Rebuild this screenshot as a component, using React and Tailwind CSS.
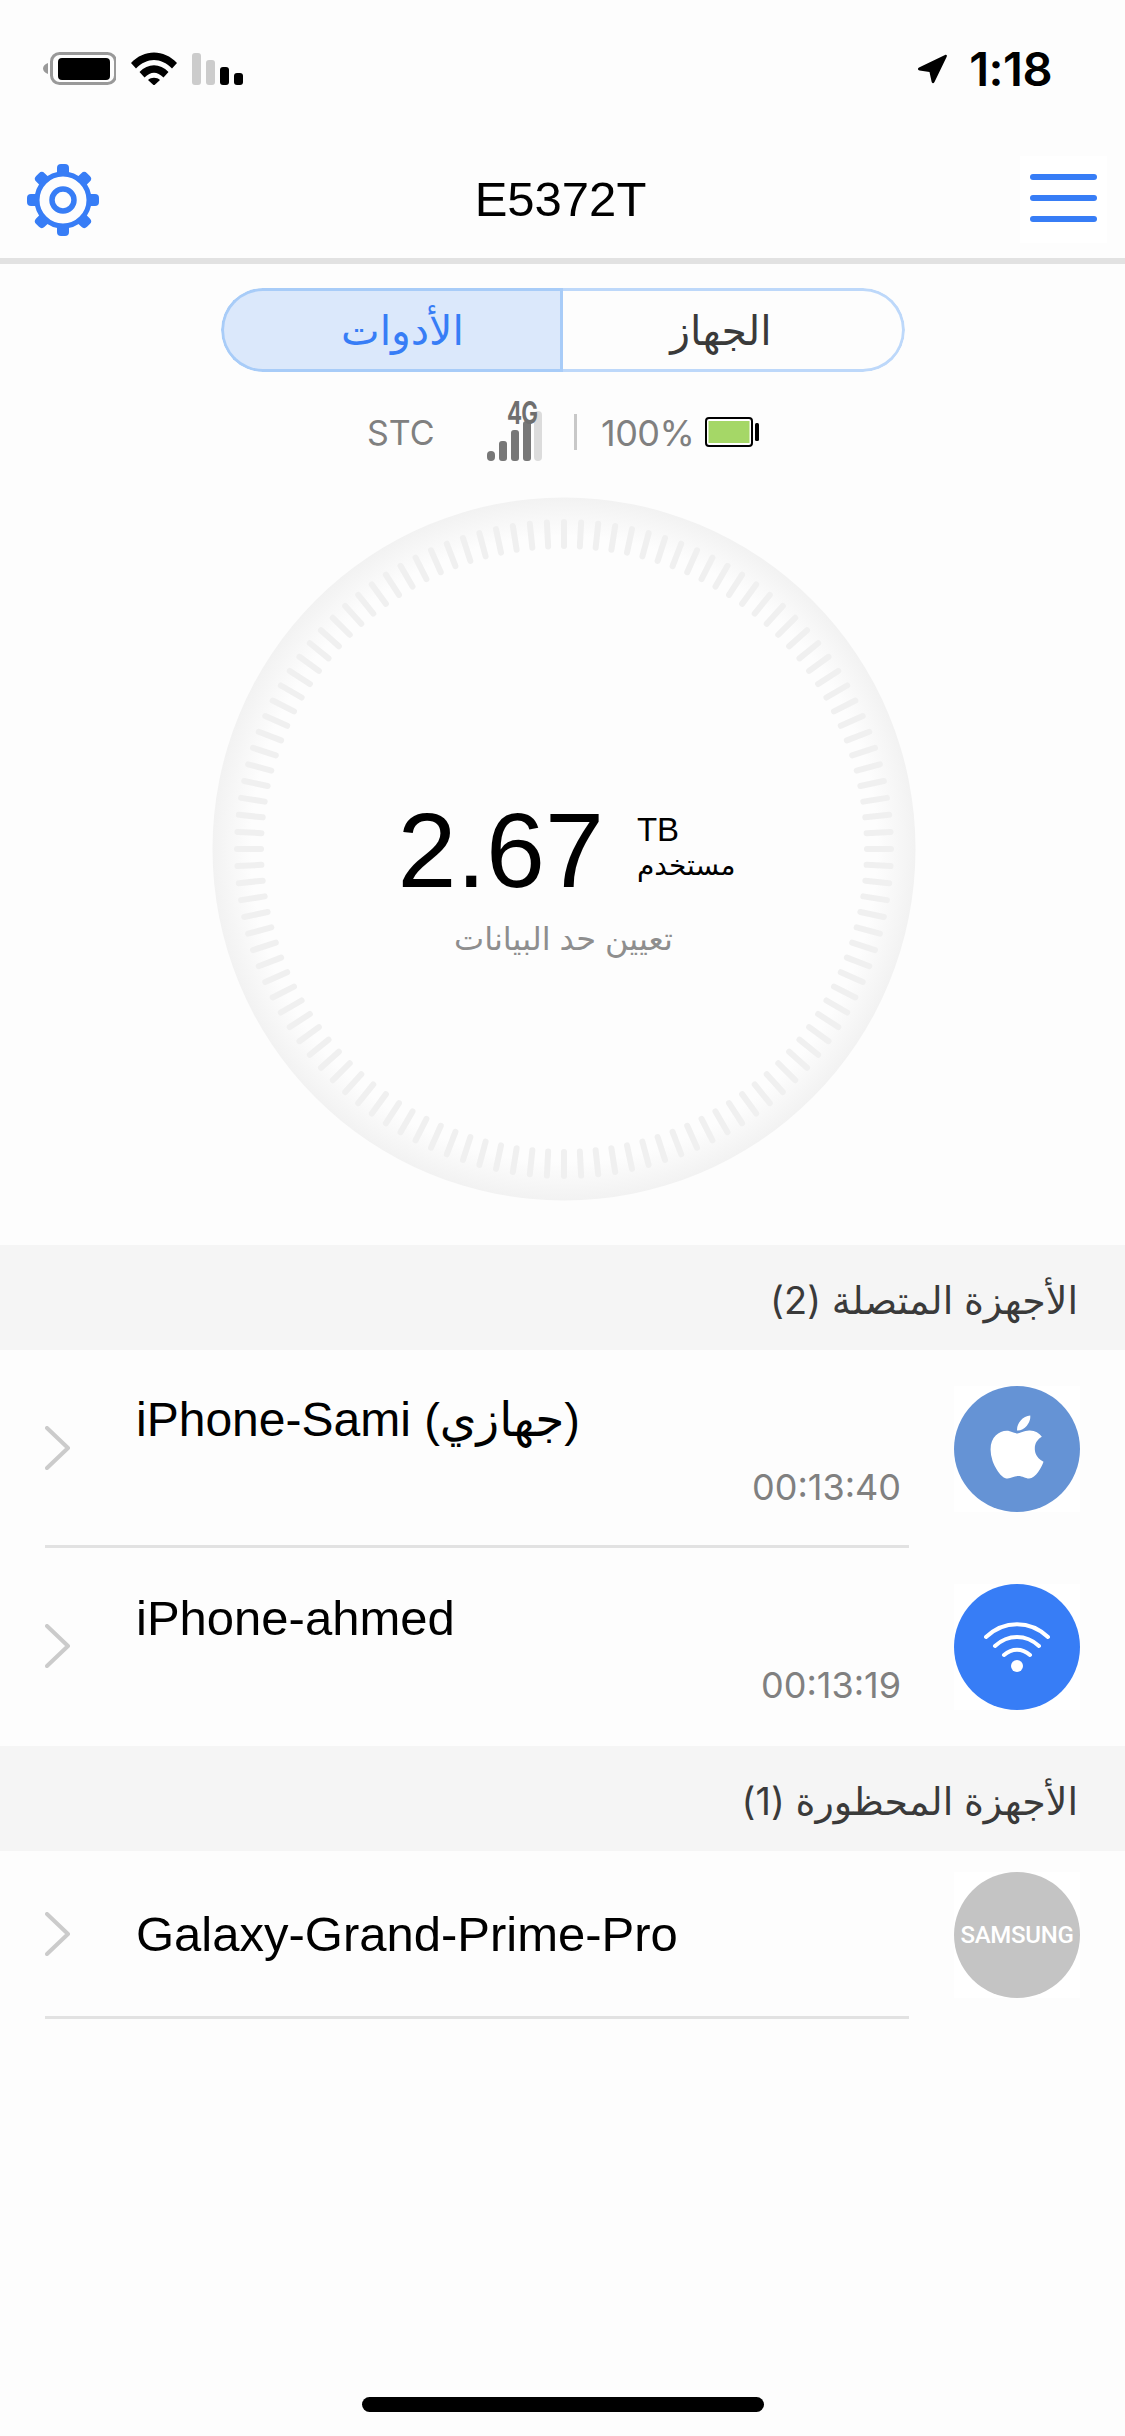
import React from "react";
import { FaApple } from "react-icons/fa";

const SANS = "font-['Liberation_Sans','DejaVu_Sans',sans-serif]";
const UI = "font-['Inter','DejaVu_Sans',sans-serif]";

function Gear() {
  const angles = [0, 45, 90, 135, 180, 225, 270, 315];
  return (
    <svg width="74" height="74" viewBox="0 0 74 74" fill="none">
      {angles.map((a) => (
        <rect key={a} x="31" y="1" width="12" height="14" rx="4" fill="#377df6" transform={`rotate(${a} 37 37)`} />
      ))}
      <circle cx="37" cy="37" r="26" stroke="#377df6" strokeWidth="5" fill="#fdfdfd" />
      <circle cx="37" cy="37" r="11" stroke="#377df6" strokeWidth="5.5" />
    </svg>
  );
}

function StatusBar() {
  return (
    <div className="h-[156px] flex items-start justify-between pt-[52px] pl-[43px] pr-[73px]">
      <div className="flex items-start">
        <svg width="73" height="33" viewBox="0 0 73 33">
          <path d="M5 11 C2 12 0 14 0 16.500 C0 19 2 21 5 22 Z" fill="#999" />
          <rect x="8.500" y="1.500" width="64" height="30" rx="8" fill="none" stroke="#999" strokeWidth="3" />
          <rect x="15" y="6" width="52" height="22" rx="4" fill="#000" />
        </svg>
        <svg className="ml-[15px]" width="46" height="33" viewBox="0 0 46 33">
          <path d="M0 11 C13 -3 33 -3 46 11 L41 16.500 C30 5 16 5 5 16.500 Z" fill="#000" />
          <path d="M8.500 20 C17 11 29 11 37.500 20 L32.500 25.500 C26 19 20 19 13.500 25.500 Z" fill="#000" />
          <path d="M17 28 C20 25 26 25 29 28 L23 33.500 Z" fill="#000" />
        </svg>
        <div className="ml-[15px] h-[33px] flex items-end gap-[5px]">
          <div className="w-[9px] h-[32px] rounded-[3px] bg-[#cccccc]" />
          <div className="w-[9px] h-[25px] rounded-[3px] bg-[#cccccc]" />
          <div className="w-[9px] h-[18px] rounded-[3px] bg-black" />
          <div className="w-[9px] h-[12px] rounded-[3px] bg-black" />
        </div>
      </div>
      <div className="flex items-center h-[33px]">
        <svg width="31" height="31" viewBox="0 0 31 31">
          <path d="M2 14.500 L28 2 C29.500 1.400 30.300 2.200 29.700 3.700 L17.500 29 C16.500 30.800 15 30.500 14.600 28.800 L12.500 19 L2.500 17.500 C0.500 17 0.500 15.300 2 14.500 Z" fill="#000" />
        </svg>
        <span className={`ml-[21px] ${UI} text-[47px] leading-[33px] font-semibold tracking-[-0.5px] text-black`}>1:18</span>
      </div>
    </div>
  );
}

function Header() {
  return (
    <div className="h-[102px] flex items-center justify-between pl-[26px] pr-[18px] relative">
      <div className="w-[74px] h-[74px] -mt-[14px]"><Gear /></div>
      <span className={`${SANS} text-[49px] leading-[48px] text-black -mt-[17px] ml-[1px]`}>E5372T</span>
      <div className="w-[87px] h-[87px] bg-white flex flex-col items-center justify-center gap-[15px] pb-[3px] -mt-[15px]">
        <div className="w-[67px] h-[6px] rounded-full bg-[#377df6]" />
        <div className="w-[67px] h-[6px] rounded-full bg-[#377df6]" />
        <div className="w-[67px] h-[6px] rounded-full bg-[#377df6]" />
      </div>
    </div>
  );
}

function Segmented() {
  return (
    <div className="mt-[24px] mx-auto w-[684px] h-[84px] flex rounded-full overflow-hidden">
      <div className="w-[339px] h-full bg-[#dbe8fb] border-[3px] border-r-0 border-[#a8ccf8] rounded-l-full flex items-center justify-center pl-[22px]">
        <span dir="rtl" className={`${UI} text-[41px] font-medium text-[#377df6] leading-none`}>الأدوات</span>
      </div>
      <div className="w-[3px] h-full bg-[#a8ccf8]" />
      <div className="flex-1 h-full border-[3px] border-l-0 border-[#bdd8fa] rounded-r-full flex items-center justify-center pr-[22px]">
        <span dir="rtl" className={`${UI} text-[41px] text-[#3a3a3a] leading-none`}>الجهاز</span>
      </div>
    </div>
  );
}

function Signal() {
  return (
    <div className="relative w-[56px] h-[60px]">
      <svg className="absolute inset-0" width="56" height="60" viewBox="0 0 56 60">
        <rect x="47" y="10" width="8" height="50" rx="4" fill="#dcdcdc" />
        <rect x="0" y="50" width="8" height="10" rx="4" fill="#777" />
        <rect x="12" y="40" width="8" height="20" rx="3" fill="#777" />
        <rect x="24" y="29" width="8" height="31" rx="3" fill="#777" />
        <rect x="36" y="20" width="8" height="40" rx="3" fill="#777" />
      </svg>
      <span className={`absolute left-[20px] top-[-2px] ${UI} font-bold text-[31px] leading-[28px] text-[#6f6f6f] inline-block origin-left scale-x-[0.72] tracking-[-1px]`}>4G</span>
    </div>
  );
}

function InfoRow() {
  return (
    <div className="mt-[29px] h-[60px] flex items-center pl-[367px]">
      <span className={`${UI} text-[34px] leading-none text-[#808080] w-[120px] mt-[3px]`}>STC</span>
      <Signal />
      <div className="ml-[31px] w-[3px] h-[36px] bg-[#c8c8c8] mt-[2px]" />
      <span className={`ml-[24px] ${UI} text-[36px] leading-none text-[#808080] tracking-[-0.5px] mt-[3px]`}>100%</span>
      <svg className="ml-[11px] mt-[2px]" width="54" height="30" viewBox="0 0 54 30">
        <rect x="1" y="1" width="46" height="28" rx="3" fill="#fff" stroke="#000" strokeWidth="2" />
        <rect x="3.500" y="4" width="41" height="22" fill="#a5d767" />
        <rect x="50" y="6" width="4" height="18" rx="1.500" fill="#000" />
      </svg>
    </div>
  );
}

function Gauge() {
  const ticks = Array.from({ length: 120 }, (_, i) => i * 3);
  return (
    <div className="relative w-[704px] h-[704px] mx-auto mt-[36px] translate-x-[1px]">
      <svg className="absolute inset-0" width="704" height="704" viewBox="0 0 704 704">
        <defs>
          <radialGradient id="ring" cx="50%" cy="50%" r="50%">
            <stop offset="0.89" stopColor="#fdfdfd" />
            <stop offset="1" stopColor="#f2f2f2" />
          </radialGradient>
        </defs>
        <circle cx="352" cy="352" r="351.500" fill="url(#ring)" />
        {ticks.map((a) => (
          <line key={a} x1="352" y1="25" x2="352" y2="49" stroke="#f0f0f0" strokeWidth="6" strokeLinecap="round" transform={`rotate(${a} 352 352)`} />
        ))}
      </svg>
      <div className="absolute inset-0 flex flex-col items-center">
        <div className="flex items-start mt-[310px] translate-x-[3px]">
          <span className={`${SANS} text-[106px] leading-[86px] text-black`}>2.67</span>
          <div className="ml-[33px] flex flex-col items-start">
            <span className={`${SANS} text-[33px] leading-[36px] mt-[5px] text-black`}>TB</span>
            <span dir="rtl" className={`${SANS} text-[28px] leading-[36px] text-black`}>مستخدم</span>
          </div>
        </div>
        <span dir="rtl" className={`${SANS} text-[32px] leading-[40px] text-[#8e8e8e] mt-[26px]`}>تعيين حد البيانات</span>
      </div>
    </div>
  );
}

function SectionHeader({ children }) {
  return (
    <div className="h-[105px] bg-[#f5f5f5] flex items-center justify-end pr-[47px]">
      <span dir="rtl" className={`${UI} text-[38px] leading-none text-[#3a3a3a] mt-[5px]`}>{children}</span>
    </div>
  );
}

function Chevron() {
  return (
    <svg className="shrink-0" width="26" height="44" viewBox="0 0 26 44" fill="none">
      <path d="M2 2 L23 22 L2 42" stroke="#cbcbcb" strokeWidth="4" strokeLinecap="round" strokeLinejoin="round" />
    </svg>
  );
}

function Row({ name, time, tall, icon, rule = true }) {
  return (
    <div className={`${tall ? "h-[198px]" : "h-[168px]"} flex pl-[45px]`}>
      <div className={`w-[864px] h-full border-b-[3px] ${rule ? "border-[#e2e2e2]" : "border-transparent"} flex items-center`}>
        <Chevron />
        <div className={`flex-1 ml-[65px] pr-[8px] flex flex-col ${time ? "pt-[4px]" : ""}`}>
          <span className={`${SANS} text-[49px] leading-[54px] text-black`}>{name}</span>
          {time && <span className={`${UI} self-end text-[36px] leading-[40px] mt-[20px] text-[#808080]`}>{time}</span>}
        </div>
      </div>
      <div className="ml-[45px] w-[126px] h-full flex items-center">
        <div className="w-[126px] h-[126px] bg-white">{icon}</div>
      </div>
    </div>
  );
}

const AppleIcon = (
  <div className="w-full h-full rounded-full bg-[#6593d5] flex items-center justify-center">
    <FaApple className="text-white -mt-[4px]" size={72} />
  </div>
);
const WifiIcon = (
  <div className="w-full h-full rounded-full bg-[#377df6] flex items-center justify-center">
    <svg width="66" height="50" viewBox="0 0 66 50" fill="none">
      <path d="M2 15 C20 -2 46 -2 64 15" stroke="#fff" strokeWidth="4" strokeLinecap="round" />
      <path d="M11 24 C24 12 42 12 55 24" stroke="#fff" strokeWidth="4" strokeLinecap="round" />
      <path d="M20 33 C28 26 38 26 46 33" stroke="#fff" strokeWidth="4" strokeLinecap="round" />
      <circle cx="33" cy="44" r="6" fill="#fff" />
    </svg>
  </div>
);
const SamsungIcon = (
  <div className="w-full h-full rounded-full bg-[#c4c4c4] flex items-center justify-center">
    <span className="font-['Roboto',sans-serif] font-medium text-[24px] tracking-[-0.3px] leading-none text-white">SAMSUNG</span>
  </div>
);

const SamiName = (
  <>
    <span className="text-[48px]">iPhone-Sami </span>
    <span className="text-[47px]">(جهازي)</span>
  </>
);

export default function App() {
  return (
    <div className="w-[1125px] h-[2436px] bg-[#fdfdfd] relative overflow-hidden" dir="ltr">
      <StatusBar />
      <Header />
      <div className="h-[6px] bg-[#e2e2e2]" />
      <Segmented />
      <InfoRow />
      <Gauge />
      <div className="mt-[44px]">
        <SectionHeader>الأجهزة المتصلة (2)</SectionHeader>
        <Row tall name={SamiName} time="00:13:40" icon={AppleIcon} />
        <Row tall rule={false} name="iPhone-ahmed" time="00:13:19" icon={WifiIcon} />
        <SectionHeader>الأجهزة المحظورة (1)</SectionHeader>
        <Row name="Galaxy-Grand-Prime-Pro" icon={SamsungIcon} />
      </div>
      <div className="absolute left-[362px] top-[2397px] w-[402px] h-[15px] rounded-[8px] bg-black" />
    </div>
  );
}
